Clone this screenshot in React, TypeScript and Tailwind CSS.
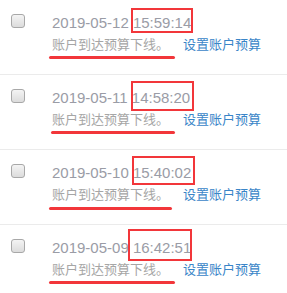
const rows = [
  { date: "2019-05-12", time: "15:59:14", box: { left: 131, top: 8, width: 62, height: 25 }, line: { left: 49, top: 56, width: 126 } },
  { date: "2019-05-11", time: "14:58:20", box: { left: 131, top: 6, width: 63, height: 30 }, line: { left: 51, top: 56, width: 124 } },
  { date: "2019-05-10", time: "15:40:02", box: { left: 132, top: 6, width: 63, height: 29 }, line: { left: 49, top: 57, width: 123 } },
  { date: "2019-05-09", time: "16:42:51", box: { left: 128, top: 4, width: 64, height: 32 }, line: { left: 49, top: 56, width: 126 } },
];

export default function App() {
  return (
    <div className="w-[287px] h-[293px] overflow-hidden bg-white font-['Liberation_Sans','Noto_Sans_CJK_SC',sans-serif]">
      {rows.map((r, i) => (
        <div key={i} className="relative h-[75px] flex pl-[11px] border-b border-[#ebebeb] box-border">
          <div className="mt-[14px] w-[14px] h-[14px] rounded-[3px] border border-[#a8a8a8] bg-gradient-to-b from-[#f4f4f4] to-[#dcdcdc] shrink-0" />
          <div className="ml-[27px] pt-[13px]">
            <div className="text-[15px] leading-[20px] text-[#9a9ca6] whitespace-nowrap">
              {r.date} {r.time}
            </div>
            <div className="mt-[1px] text-[13px] leading-[20px] whitespace-nowrap font-['Noto_Sans_CJK_SC',sans-serif]">
              <span className="text-[#a6a6a6]">账户到达预算下线。</span>
              <span className="ml-[14px] text-[#3a85c8]">设置账户预算</span>
            </div>
          </div>
          <div
            className="absolute border-2 border-[#f2363a]"
            style={{ left: r.box.left, top: r.box.top, width: r.box.width, height: r.box.height }}
          />
          <div
            className="absolute h-[3px] rounded-full bg-[#f2363a]"
            style={{ left: r.line.left, top: r.line.top, width: r.line.width }}
          />
        </div>
      ))}
    </div>
  );
}
